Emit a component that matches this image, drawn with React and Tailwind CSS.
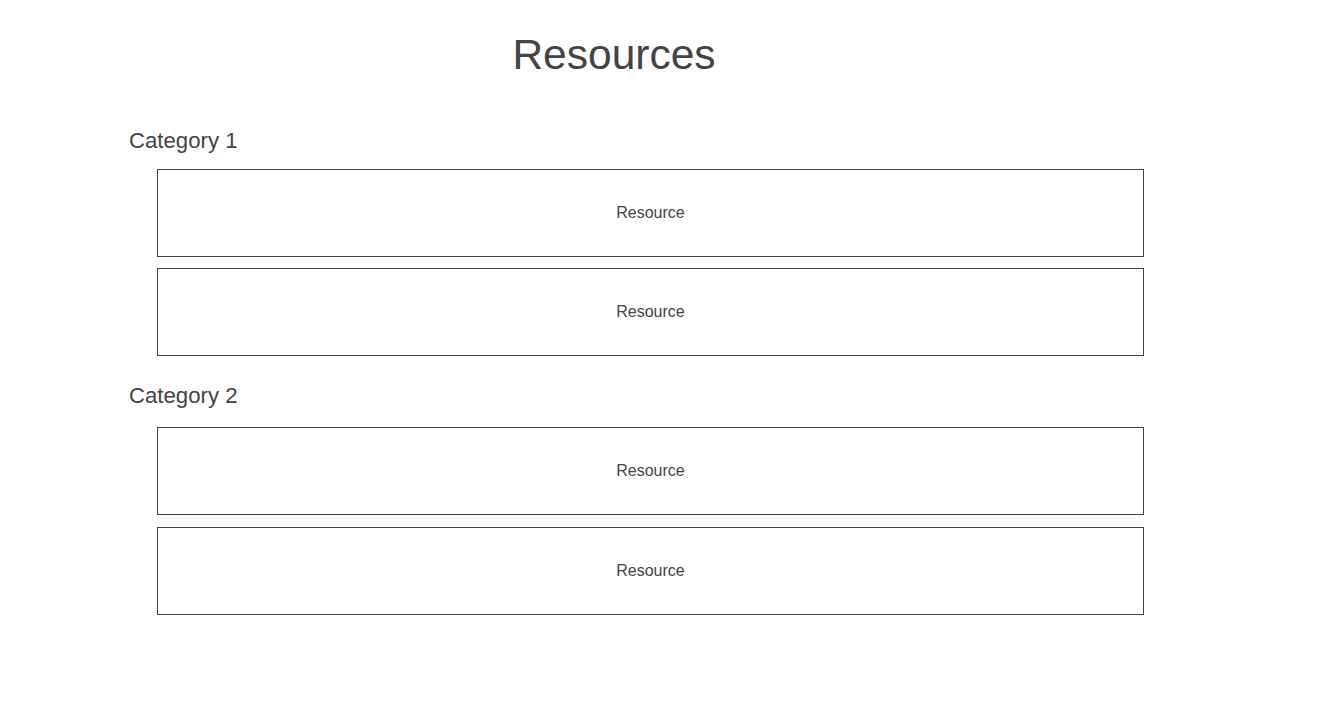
import React from 'react';

const Resource = ({ label = 'Resource' }) => (
  <div className="h-[88px] w-[987px] border border-[#444444] flex items-center justify-center text-[16px] text-[#444444]">
    {label}
  </div>
);

export default function App() {
  return (
    <div className="min-h-screen bg-white text-[#444444] font-['Liberation_Sans',Arial,sans-serif]">
      <div className="pt-[31px]">
        <h1 className="w-[1228px] text-center text-[42.5px] leading-[48px] font-normal">Resources</h1>
      </div>

      <div className="pl-[129px] pt-[49px]">
        {/* Category 1 */}
        <section>
          <h2 className="text-[22.2px] leading-[26px] mb-[15px]">Category 1</h2>
          <div className="pl-[28px] flex flex-col gap-[11px]">
            <Resource />
            <Resource />
          </div>
        </section>

        {/* Category 2 */}
        <section className="mt-[27px]">
          <h2 className="text-[22.2px] leading-[26px] mb-[18px]">Category 2</h2>
          <div className="pl-[28px] flex flex-col gap-[12px]">
            <Resource />
            <Resource />
          </div>
        </section>
      </div>
    </div>
  );
}
